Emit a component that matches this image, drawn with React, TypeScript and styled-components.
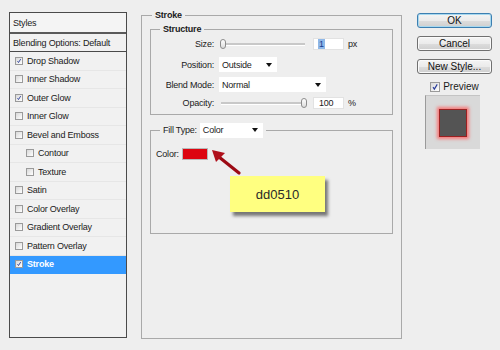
import styled, { createGlobalStyle } from 'styled-components';

const GlobalStyle = createGlobalStyle`
  html, body {
    margin: 0;
    padding: 0;
    background: #eeeeee;
    font-family: "Liberation Sans", Arial, sans-serif;
    font-size: 9px;
    letter-spacing: -0.2px;
    color: #1a1a1a;
  }
`;

const Page = styled.div`
  position: relative;
  width: 500px;
  height: 350px;
  overflow: hidden;
  display: flex;
  align-items: flex-start;
  padding-left: 9px;
  box-sizing: border-box;
`;

/* ---------- left styles list ---------- */

const StylesPanel = styled.div`
  margin-top: 12px;
  width: 118px;
  height: 326px;
  box-sizing: border-box;
  border: 1px solid #4a4a4a;
  background: #f1f1f1;
  display: flex;
  flex-direction: column;
`;

const PanelHeader = styled.div`
  height: 19px;
  display: flex;
  align-items: center;
  padding-left: 3px;
  border-bottom: 2px solid #5a5a5a;
  background: #f4f4f4;
`;

const BlendRow = styled.div`
  height: 17px;
  display: flex;
  align-items: center;
  padding-left: 3px;
  border-bottom: 1px solid #4a4a4a;
`;

const StyleRow = styled.div<{ $indent?: boolean; $selected?: boolean }>`
  height: 18.5px;
  display: flex;
  align-items: center;
  gap: 4px;
  padding-left: ${p => (p.$indent ? '16px' : '5px')};
  background: ${p => (p.$selected ? '#3399ff' : 'transparent')};
  color: ${p => (p.$selected ? '#ffffff' : '#1a1a1a')};
  font-weight: ${p => (p.$selected ? 'bold' : 'normal')};
  border-bottom: 1px solid ${p => (p.$selected ? '#3399ff' : '#e6e6e6')};
  box-sizing: border-box;
`;

const CheckBox = styled.span<{ $size?: number }>`
  width: ${p => p.$size ?? 8}px;
  height: ${p => p.$size ?? 8}px;
  box-sizing: border-box;
  border: 1px solid #9a9a9a;
  background: linear-gradient(135deg, #d8d8d8, #ffffff);
  display: inline-flex;
  align-items: center;
  justify-content: center;
  flex-shrink: 0;

  svg {
    width: 100%;
    height: 100%;
  }
`;

const Check = ({ checked, size }: { checked?: boolean; size?: number }) => (
  <CheckBox $size={size}>
    {checked && (
      <svg viewBox="0 0 10 10">
        <path d="M2.5 5.2 L4.2 7.6 L7.8 1.8" fill="none" stroke="#2a3d9a" strokeWidth="1.5" />
      </svg>
    )}
  </CheckBox>
);

/* ---------- middle group boxes ---------- */

const Group = styled.fieldset`
  margin: 9px 0 0 14px;
  padding: 0 8px;
  width: 261px;
  height: 330px;
  box-sizing: border-box;
  border: 1px solid #a9a9a9;
  min-inline-size: 0;
`;

const SubGroup = styled.fieldset<{ $top: number; $pl: number; $h: number }>`
  margin: ${p => p.$top}px 0 0 0;
  padding: 0 8px 0 ${p => p.$pl}px;
  height: ${p => p.$h}px;
  box-sizing: border-box;
  border: 1px solid #a9a9a9;
  min-inline-size: 0;
`;

const Legend = styled.legend<{ $ml: number }>`
  margin-left: ${p => p.$ml}px;
  padding: 0 3px;
  font-weight: bold;
  line-height: 12px;
  color: #1a1a1a;
`;

const FillLegend = styled.legend`
  margin-left: 4px;
  padding: 0 3px;
  display: flex;
  align-items: center;
  gap: 3px;
  height: 16px;
`;

const Rows = styled.div`
  display: flex;
  flex-direction: column;
  gap: 5px;
  padding-top: 1px;
`;

const FormRow = styled.div<{ $h: number }>`
  height: ${p => p.$h}px;
  display: flex;
  align-items: center;
`;

const Label = styled.span`
  width: 60px;
  padding-right: 5px;
  box-sizing: border-box;
  text-align: right;
`;

const Slider = styled.div`
  position: relative;
  width: 86px;
  height: 12px;
  margin-right: 8px;
`;

const Track = styled.div`
  position: absolute;
  left: 2px;
  right: 0;
  top: 5px;
  height: 2px;
  background: #c8c8c8;
  border-bottom: 1px solid #ffffff;
`;

const Thumb = styled.div<{ $at: number }>`
  position: absolute;
  top: 1px;
  left: ${p => p.$at}px;
  width: 6px;
  height: 10px;
  box-sizing: border-box;
  border: 1px solid #8c8c8c;
  border-radius: 3px;
  background: linear-gradient(#ffffff, #dcdcdc);
`;

const NumberBox = styled.div<{ $focus?: boolean }>`
  width: 31px;
  height: 12px;
  box-sizing: border-box;
  background: #ffffff;
  border: 1px solid #e2e2e2;
  display: flex;
  align-items: center;
  padding-left: 4px;

  span {
    background: ${p => (p.$focus ? '#8fb8e8' : 'transparent')};
    color: ${p => (p.$focus ? '#1a3d8f' : '#1a1a1a')};
    padding: 0 1px;
  }
`;

const Unit = styled.span`
  margin-left: 4px;
`;

const Select = styled.div<{ $w: number }>`
  width: ${p => p.$w}px;
  height: 15px;
  box-sizing: border-box;
  background: #ffffff;
  display: flex;
  align-items: center;
  justify-content: space-between;
  padding: 0 5px 0 3px;

  &::after {
    content: '';
    border-left: 3px solid transparent;
    border-right: 3px solid transparent;
    border-top: 4px solid #111;
  }
`;

const ColorRow = styled.div`
  margin-top: 10px;
  height: 12px;
  display: flex;
  align-items: center;
  gap: 3px;
`;

const Swatch = styled.div`
  width: 26px;
  height: 12px;
  background: #dd0510;
  border: 1px solid #b8b8b8;
  box-sizing: border-box;
`;

/* ---------- right column ---------- */

const Side = styled.div`
  margin: 13px 0 0 15px;
  width: 75px;
  display: flex;
  flex-direction: column;
  gap: 8px;
`;

const Button = styled.div<{ $default?: boolean }>`
  height: 15px;
  box-sizing: border-box;
  border: 1px solid ${p => (p.$default ? '#3c7fb1' : '#707070')};
  border-radius: 3px;
  background: linear-gradient(#f4f4f4 0%, #ebebeb 50%, #dddddd 51%, #cfcfcf 100%);
  box-shadow: ${p => (p.$default ? 'inset 0 0 0 1px #a7d8ef' : 'inset 0 0 0 1px #fafafa')};
  display: flex;
  align-items: center;
  justify-content: center;
  font-size: 10px;
  letter-spacing: 0;
  color: #111;
`;

const PreviewToggle = styled.div`
  margin-top: -1px;
  display: flex;
  align-items: center;
  justify-content: center;
  gap: 3px;
  font-size: 10px;
  letter-spacing: 0;
`;

const PreviewBox = styled.div`
  margin: -5px 0 0 8px;
  width: 55px;
  height: 54px;
  box-sizing: border-box;
  background: #d9d9d9;
  border-left: 1px solid #9a9a9a;
  border-top: 1px solid #c4c4c4;
  display: flex;
  align-items: center;
  justify-content: center;
`;

const PreviewSquare = styled.div`
  width: 28px;
  height: 28px;
  box-sizing: border-box;
  background: #545454;
  border: 1px solid #9a2020;
  box-shadow: 0 0 3px 2px rgba(255, 90, 90, 0.75);
`;

/* ---------- annotation ---------- */

const Arrow = styled.svg`
  position: absolute;
  left: 208px;
  top: 146px;
  width: 36px;
  height: 32px;
`;

const Note = styled.div`
  position: absolute;
  left: 230px;
  top: 176px;
  width: 95px;
  height: 36px;
  background: #ffff80;
  box-shadow: 3px 4px 3px rgba(40, 40, 40, 0.6);
  display: flex;
  align-items: center;
  justify-content: center;
  font-size: 13px;
  letter-spacing: 0;
  color: #2a2a2a;
`;

const layers: { name: string; checked?: boolean; indent?: boolean; selected?: boolean }[] = [
  { name: 'Drop Shadow', checked: true },
  { name: 'Inner Shadow' },
  { name: 'Outer Glow', checked: true },
  { name: 'Inner Glow' },
  { name: 'Bevel and Emboss' },
  { name: 'Contour', indent: true },
  { name: 'Texture', indent: true },
  { name: 'Satin' },
  { name: 'Color Overlay' },
  { name: 'Gradient Overlay' },
  { name: 'Pattern Overlay' },
  { name: 'Stroke', checked: true, selected: true },
];

export default function App() {
  return (
    <>
      <GlobalStyle />
      <Page>
        <StylesPanel>
          <PanelHeader>Styles</PanelHeader>
          <BlendRow>Blending Options: Default</BlendRow>
          {layers.map(l => (
            <StyleRow key={l.name} $indent={l.indent} $selected={l.selected}>
              <Check checked={l.checked} />
              {l.name}
            </StyleRow>
          ))}
        </StylesPanel>

        <Group>
          <Legend $ml={2}>Stroke</Legend>

          <SubGroup $top={2} $pl={8} $h={92}>
            <Legend $ml={1}>Structure</Legend>
            <Rows>
              <FormRow $h={16}>
                <Label>Size:</Label>
                <Slider>
                  <Track />
                  <Thumb $at={1} />
                </Slider>
                <NumberBox $focus>
                  <span>1</span>
                </NumberBox>
                <Unit>px</Unit>
              </FormRow>
              <FormRow $h={15}>
                <Label>Position:</Label>
                <Select $w={58}>Outside</Select>
              </FormRow>
              <FormRow $h={15}>
                <Label>Blend Mode:</Label>
                <Select $w={107}>Normal</Select>
              </FormRow>
              <FormRow $h={12}>
                <Label>Opacity:</Label>
                <Slider>
                  <Track />
                  <Thumb $at={82} />
                </Slider>
                <NumberBox>
                  <span>100</span>
                </NumberBox>
                <Unit>%</Unit>
              </FormRow>
            </Rows>
          </SubGroup>

          <SubGroup $top={7} $pl={5} $h={112}>
            <FillLegend>
              Fill Type:
              <Select $w={63}>Color</Select>
            </FillLegend>
            <ColorRow>
              Color:
              <Swatch />
            </ColorRow>
          </SubGroup>
        </Group>

        <Side>
          <Button $default>OK</Button>
          <Button>Cancel</Button>
          <Button>New Style...</Button>
          <PreviewToggle>
            <Check checked size={10} />
            Preview
          </PreviewToggle>
          <PreviewBox>
            <PreviewSquare />
          </PreviewBox>
        </Side>

        <Arrow viewBox="0 0 36 32">
          <line x1="31" y1="27" x2="11" y2="11" stroke="#9c0a14" strokeWidth="3.2" strokeLinecap="round" />
          <polygon points="4,4 17,7 8,16" fill="#b0101c" />
        </Arrow>
        <Note>dd0510</Note>
      </Page>
    </>
  );
}
